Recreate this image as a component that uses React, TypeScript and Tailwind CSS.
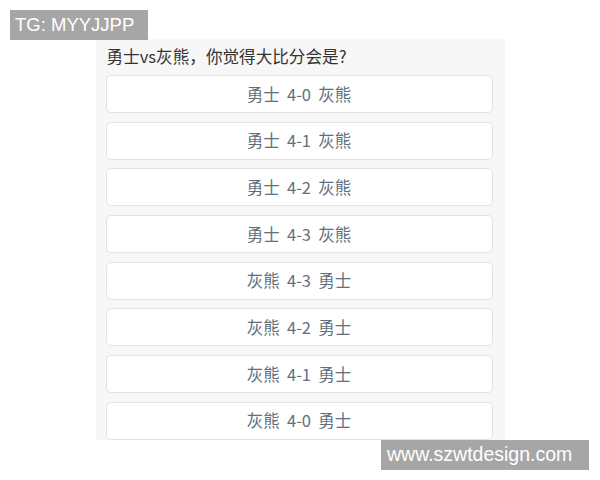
const options = [
  '勇士 4-0 灰熊',
  '勇士 4-1 灰熊',
  '勇士 4-2 灰熊',
  '勇士 4-3 灰熊',
  '灰熊 4-3 勇士',
  '灰熊 4-2 勇士',
  '灰熊 4-1 勇士',
  '灰熊 4-0 勇士',
];

const font = {fontFamily: '"Noto Sans CJK SC", "Noto Sans", sans-serif'};

export default function App() {
  return (
    <div className="relative h-[480px] w-[600px] bg-white overflow-hidden" style={font}>
      <div className="pt-[39px]">
        <div className="mx-auto w-[409px] h-[401px] overflow-hidden bg-[#f7f7f7] pl-[10px] pr-[12px]">
          <div className="h-[34px] flex items-center pl-[1px] text-[16.6px] text-[#333333]">
            勇士vs灰熊，你觉得大比分会是?
          </div>
          <div className="mt-[2px] flex flex-col gap-[8.7px]">
            {options.map(item => (
              <div
                key={item}
                className="h-[38px] shrink-0 flex items-center justify-center rounded-[5px] border border-[#e3e3e3] bg-white text-[16.5px] text-[#617080] [word-spacing:3.5px]"
              >
                {item}
              </div>
            ))}
          </div>
        </div>
      </div>

      {/* watermarks */}
      <div
        className="absolute left-[10px] top-[10px] w-[138px] h-[30px] bg-[#a6a6a6] text-white text-[18.5px] pl-[5px] flex items-center"
        style={{fontFamily: '"Liberation Sans", Arial, sans-serif'}}
      >
        TG: MYYJJPP
      </div>
      <div
        className="absolute left-[381px] top-[440px] w-[208px] h-[30px] bg-[#a6a6a6] text-white text-[19.5px] pl-[6px] flex items-center"
        style={{fontFamily: '"Liberation Sans", Arial, sans-serif'}}
      >
        www.szwtdesign.com
      </div>
    </div>
  );
}
